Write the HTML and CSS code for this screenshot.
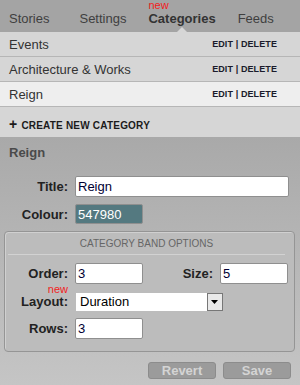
FILE: index.html
```html
<!DOCTYPE html>
<html lang="en">
<head>
    <meta charset="UTF-8">
    <meta name="viewport" content="width=device-width, initial-scale=1.0">
    <title>Categories</title>
    <link rel="stylesheet" href="styles.css">
</head>
<body>
    <div class="tabs">
        <a class="tab first">Stories</a>
        <a class="tab">Settings</a>
        <a class="tab active"><span class="new">new</span>Categories</a>
        <a class="tab">Feeds</a>
    </div>

    <ul class="list">
        <li class="row"><span>Events</span><span class="actions">EDIT | DELETE</span></li>
        <li class="row"><span>Architecture &amp; Works</span><span class="actions">EDIT | DELETE</span></li>
        <li class="row selected"><span>Reign</span><span class="actions">EDIT | DELETE</span></li>
        <li class="create"><span class="plus">+</span>CREATE NEW CATEGORY</li>
    </ul>

    <div class="panel">
        <h2>Reign</h2>
        <div class="field">
            <label>Title:</label>
            <input class="input wide" type="text" value="Reign">
        </div>
        <div class="field">
            <label>Colour:</label>
            <input class="input short colour" type="text" value="547980">
        </div>

        <div class="band">
            <div class="band-title">CATEGORY BAND OPTIONS</div>
            <div class="field">
                <label>Order:</label>
                <input class="input short" type="text" value="3">
                <label class="grow">Size:</label>
                <input class="input short" type="text" value="5">
            </div>
            <div class="field">
                <label><span class="new">new</span>Layout:</label>
                <div class="select">
                    <span class="select-value">Duration</span>
                    <span class="select-btn">
                        <svg width="8" height="5" viewBox="0 0 8 5"><path d="M0 0h7L3.5 4z" fill="#000"/></svg>
                    </span>
                </div>
            </div>
            <div class="field">
                <label>Rows:</label>
                <input class="input short" type="text" value="3">
            </div>
        </div>

        <div class="buttons">
            <button>Revert</button>
            <button>Save</button>
        </div>
    </div>
</body>
</html>
```

FILE: styles.css
```css
body {
    margin: 0;
    width: 300px;
    font-family: 'Liberation Sans', Arial, sans-serif;
    background: #c4c4c4;
}

.tabs {
    display: flex;
    align-items: flex-end;
    height: 32px;
    padding-left: 9px;
    background: #a4a4a4;
    box-sizing: border-box;
    padding-bottom: 6px;
}

.tab {
    position: relative;
    margin-right: 22px;
    font-size: 13px;
    line-height: 15px;
    color: #3f3f3f;
}

.tab.first {
    margin-right: 30px;
}

.tab.active {
    font-weight: bold;
    color: #333;
}

.tab.active::after {
    content: '';
    position: absolute;
    left: 50%;
    bottom: -6px;
    margin-left: -5px;
    border: 5px solid transparent;
    border-bottom-color: #d6d6d6;
    border-top-width: 0;
}

.new {
    position: absolute;
    top: -11px;
    left: 0;
    font-size: 11px;
    font-weight: normal;
    line-height: 10px;
    color: #f21c1c;
}

.list {
    list-style: none;
    margin: 0;
    padding: 0;
    background: #d6d6d6;
}

.row {
    display: flex;
    justify-content: space-between;
    align-items: center;
    height: 24px;
    padding: 0 23px 0 9px;
    border-bottom: 1px solid #b6b6b6;
    font-size: 13px;
    color: #333;
}

.row.selected {
    background: #eeeeee;
}

.actions {
    font-size: 9px;
    font-weight: bold;
    letter-spacing: 0.1px;
    color: #1b1b2b;
}

.create {
    height: 30px;
    padding-top: 2px;
    box-sizing: border-box;
    line-height: 30px;
    padding-left: 9px;
    font-size: 10px;
    font-weight: bold;
    letter-spacing: 0.2px;
    color: #1b1b1b;
}

.plus {
    margin-right: 4px;
    font-size: 14px;
}

.panel {
    padding: 8px 0 6px;
    background: linear-gradient(#a9a9a9, #c5c5c5);
}

h2 {
    margin: 0 0 16px 9px;
    font-size: 13px;
    line-height: 15px;
    color: #4a4a4a;
}

.field {
    display: flex;
    align-items: center;
    margin-bottom: 7px;
}

.field label {
    position: relative;
    width: 68px;
    margin-right: 7px;
    text-align: right;
    font-size: 13px;
    font-weight: bold;
    color: #222;
}

.field label .new {
    left: auto;
    right: 0;
    top: -10px;
}

.input {
    box-sizing: border-box;
    height: 21px;
    padding: 0 2px;
    border: 1px solid #8f8f8f;
    border-radius: 2px;
    background: #fff;
    font-family: inherit;
    font-size: 13px;
    color: #000033;
}

.input.wide {
    width: 214px;
}

.input.short {
    width: 68px;
}

.input.colour {
    height: 20px;
    background: #547980;
    color: #fff;
}

.band {
    margin: 0 5px 10px 4px;
    padding: 0 6px 5px 0;
    border: 1px solid #959595;
    border-radius: 4px;
    background: #bcbcbc;
    box-shadow: inset 1px 1px 0 #d0d0d0;
}

.band .field label {
    width: 63px;
}

.band .field label.grow {
    flex: 1;
    width: auto;
}

.band-title {
    margin: 0 3px 8px 3px;
    padding: 6px 0 5px;
    border-bottom: 1px solid #d2d2d2;
    text-align: center;
    font-size: 10px;
    color: #666;
}

.select {
    display: flex;
    width: 147px;
    height: 18px;
    margin-left: 1px;
    margin-top: 2px;
    background: #fff;
    font-size: 13px;
    color: #000;
}

.select-value {
    flex: 1;
    padding-left: 4px;
    line-height: 18px;
}

.select-btn {
    display: flex;
    align-items: center;
    justify-content: center;
    width: 14px;
    border: 1px solid #777;
    background: #e9e9e9;
}

.buttons {
    display: flex;
    justify-content: flex-end;
    gap: 7px;
    padding-right: 9px;
}

button {
    width: 68px;
    height: 17px;
    padding: 0;
    border: 1px solid #8c8c8c;
    border-radius: 3px;
    background: #9b9b9b;
    font-family: inherit;
    font-size: 13px;
    font-weight: bold;
    color: #d4d4d4;
}
```
